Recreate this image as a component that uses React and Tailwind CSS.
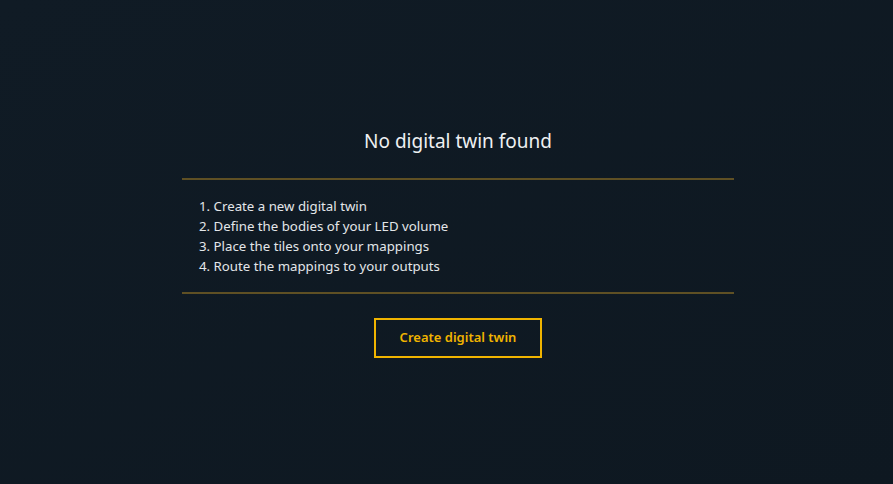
export default function App() {
  const steps = [
    "Create a new digital twin",
    "Define the bodies of your LED volume",
    "Place the tiles onto your mappings",
    "Route the mappings to your outputs",
  ];

  return (
    <div
      className="w-[893px] h-[484px] bg-[#0f1922] bg-gradient-to-br from-[#101b25] to-[#0e1821] text-[#e6e9ec] pl-[23px]"
      style={{ fontFamily: '"Noto Sans", "Open Sans", sans-serif' }}
    >
      <div className="flex flex-col items-center pt-[127px]">
        <h1 className="text-[19px] leading-[28px] font-normal text-[#eef0f2]">No digital twin found</h1>

        <div className="w-[552px] mt-[23px] border-t-2 border-b-2 border-[#5f5024] pt-[16px] pb-[16px] px-[17px]">
          <ol className="text-[13.25px] leading-[20px] text-[#e3e6e9]">
            {steps.map((s, i) => (
              <li key={s}>
                {i + 1}. {s}
              </li>
            ))}
          </ol>
        </div>

        <button className="mt-[24px] h-[40px] w-[168px] border-2 border-[#f0b400] text-[#f0b400] text-[13px] font-semibold">
          Create digital twin
        </button>
      </div>
    </div>
  );
}
